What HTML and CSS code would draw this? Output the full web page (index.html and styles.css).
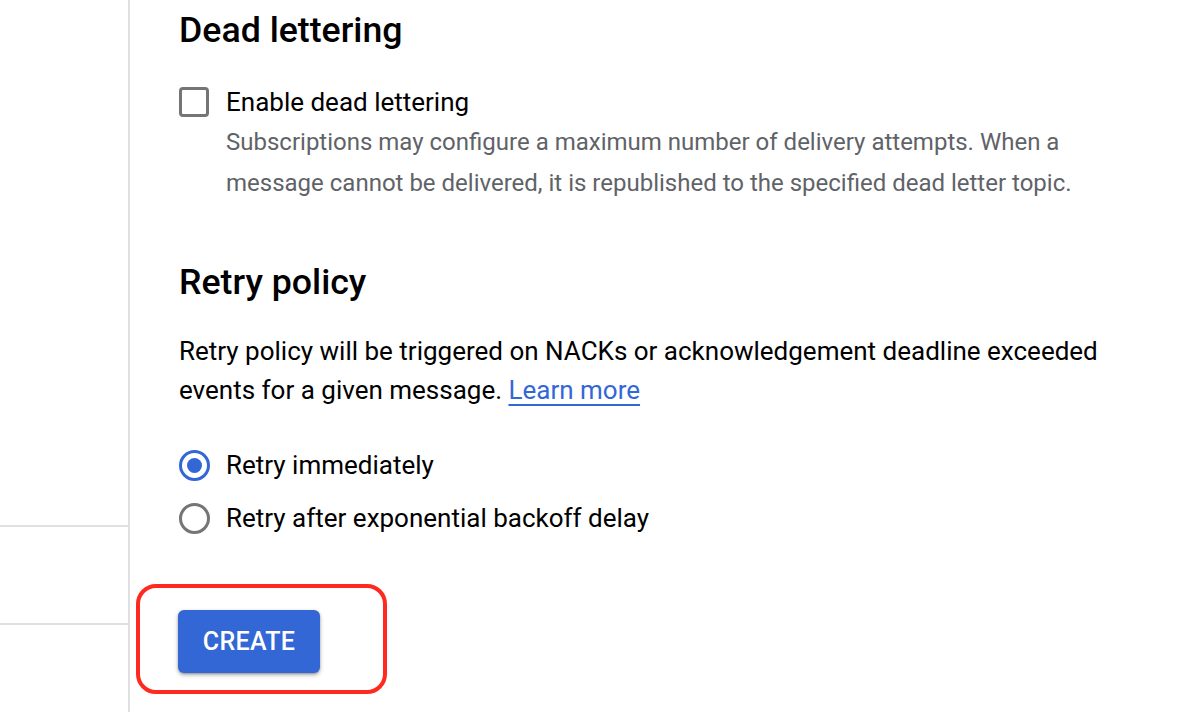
FILE: index.html
```html
<!DOCTYPE html>
<html>
<head>
<meta charset="utf-8">
<link rel="stylesheet" href="styles.css">
</head>
<body>
<div class="page">
  <aside class="side">
    <div class="side-row first"></div>
    <div class="side-row second"></div>
  </aside>
  <main class="main">
    <h2 class="title">Dead lettering</h2>
    <label class="check-row">
      <span class="checkbox"></span>
      <span class="check-text">
        <span class="check-label">Enable dead lettering</span>
        <span class="hint">Subscriptions may configure a maximum number of delivery attempts. When a message cannot be delivered, it is republished to the specified dead letter topic.</span>
      </span>
    </label>

    <h2 class="title retry">Retry policy</h2>
    <p class="para">Retry policy will be triggered on NACKs or acknowledgement deadline exceeded events for a given message. <a class="link" href="#">Learn more</a></p>

    <div class="radios">
      <label class="radio-row"><span class="radio checked"></span><span class="radio-label">Retry immediately</span></label>
      <label class="radio-row"><span class="radio"></span><span class="radio-label">Retry after exponential backoff delay</span></label>
    </div>

    <div class="actions">
      <div class="highlight">
        <button class="btn">CREATE</button>
      </div>
    </div>
  </main>
</div>
</body>
</html>
```
FILE: styles.css
```css
html, body {
  margin: 0;
  padding: 0;
  background: #ffffff;
}
body {
  font-family: Roboto, "Liberation Sans", Arial, sans-serif;
  color: #202124;
  width: 1186px;
  height: 712px;
  overflow: hidden;
}
.page {
  display: flex;
  height: 712px;
}
.side {
  width: 128px;
  flex: none;
  border-right: 2px solid #e0e0e0;
  display: flex;
  flex-direction: column;
}
.side-row {
  border-bottom: 2px solid #e0e0e0;
}
.side-row.first {
  height: 525px;
}
.side-row.second {
  height: 96px;
}
.main {
  flex: 1;
  padding-left: 49px;
  padding-right: 70px;
}
.title {
  margin: 0;
  font-size: 35.7px;
  line-height: 42px;
  font-weight: 500;
  color: #000000;
  padding-top: 9px;
}
.title.retry {
  padding-top: 0;
  margin-top: 57px;
}
.check-row {
  display: flex;
  gap: 17px;
  margin-top: 35px;
}
.checkbox {
  flex: none;
  width: 24px;
  height: 24px;
  border: 3.5px solid #757575;
  border-radius: 4px;
  margin-top: 1px;
}
.check-text {
  display: flex;
  flex-direction: column;
}
.check-label {
  font-size: 26px;
  line-height: 32px;
  color: #000000;
}
.hint {
  font-size: 24px;
  line-height: 41px;
  color: #5f6368;
  margin-top: 4px;
}
.para {
  margin: 29px 0 0;
  font-size: 26px;
  line-height: 39px;
  color: #000000;
}
.link {
  display: inline-block;
  line-height: 30px;
  color: #3367d6;
  text-decoration: underline;
  text-underline-offset: 5px;
  text-decoration-thickness: 2px;
}
.radios {
  margin-top: 39px;
  display: flex;
  flex-direction: column;
  gap: 21px;
}
.radio-row {
  display: flex;
  align-items: center;
  gap: 16px;
}
.radio {
  flex: none;
  width: 25px;
  height: 25px;
  border: 3.5px solid #757575;
  border-radius: 50%;
  display: flex;
  align-items: center;
  justify-content: center;
}
.radio.checked {
  border-color: #3367d6;
}
.radio.checked::after {
  content: "";
  width: 15px;
  height: 15px;
  border-radius: 50%;
  background: #3367d6;
}
.radio-label {
  font-size: 26px;
  line-height: 32px;
  color: #000000;
}
.actions {
  margin-top: 50px;
  margin-left: -43px;
}
.highlight {
  display: inline-flex;
  align-items: flex-start;
  width: 251px;
  height: 110px;
  border: 4px solid #ff2a1f;
  border-radius: 20px;
  padding: 22px 0 0 38px;
  box-sizing: border-box;
}
.btn {
  width: 142px;
  height: 63px;
  border: none;
  border-radius: 6px;
  background: #3367d6;
  color: #ffffff;
  font-family: Roboto, "Liberation Sans", Arial, sans-serif;
  font-size: 25px;
  font-weight: 500;
  letter-spacing: 0.3px;
  box-shadow: 0 2px 4px rgba(0,0,0,0.3), 0 1px 2px rgba(0,0,0,0.2);
  padding: 0;
}
```
